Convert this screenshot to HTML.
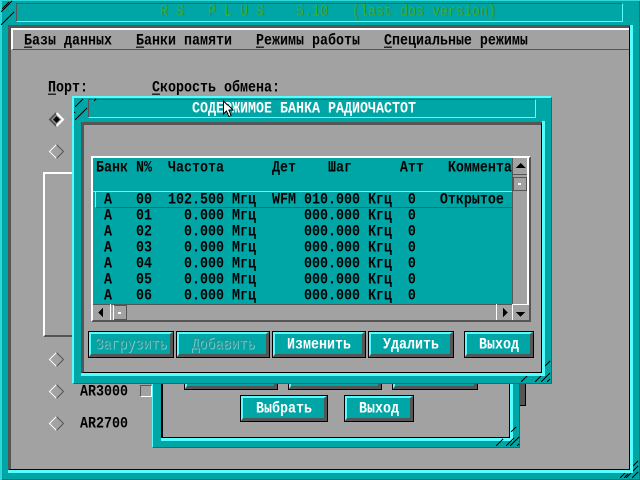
<!DOCTYPE html>
<html><head><meta charset="utf-8"><style>
html,body{margin:0;padding:0;background:#a2a2a2;}
#r{position:relative;width:640px;height:480px;overflow:hidden;background:#a2a2a2;font:bold 13.33px/16px "Liberation Mono","DejaVu Sans Mono",monospace;color:#000;}
#r div,#r pre,#r svg{position:absolute;margin:0;box-sizing:border-box;}
.t{white-space:pre;transform:scaleY(1.15);transform-origin:0 50%;font:inherit;}
.w{color:#fff;}
.u{text-decoration:underline;text-underline-offset:2px;}
.btn{background:#00a5a5;border:1px solid #000;}
.btn:before{content:"";position:absolute;left:0;top:0;right:0;bottom:0;border-top:2px solid #55ffff;border-left:2px solid #55ffff;border-right:3px solid #555;border-bottom:3px solid #555;}
.btn span{position:absolute;left:0;right:0;top:4px;text-align:center;color:#fff;transform:scaleY(1.15);font:inherit;}
.btn.d span{color:#2e8f8f;text-shadow:1px 1px 0 #6cd0d0;font-weight:normal;}
</style></head><body><div id="r">

<!-- outer window -->
<div style="left:0;top:0;width:640px;height:480px;background:#00a5a5;border-right:1px solid #555;border-bottom:1px solid #555;"></div>
<div style="left:0;top:0;width:2px;height:480px;background:#2fd8d8;"></div>
<div style="left:0;top:0;width:640px;height:1px;background:#2fd8d8;"></div>
<div style="left:16px;top:3px;width:607px;height:19px;border:1px solid;border-color:#555 #55ffff #55ffff #555;"></div>
<div class="t" style="left:160px;top:5px;color:#35b535;text-shadow:1px 0 0 #1f7f6f;font-weight:normal;">R S   P L U S    5.10   (last dos version)</div>
<svg style="left:0;top:0" width="640" height="480" stroke="#000" stroke-width="1" fill="none" shape-rendering="crispEdges">
<path d="M1 12L12 1M1 25L14 12M9 2L2 9"/>
<path d="M620 478L632 466M626 478L638 466M632 478L638 472M629 470L638 461M624 478L628 474" stroke-width="1"/>
</svg>
<!-- client -->
<div style="left:8px;top:25px;width:622px;height:445px;background:#a2a2a2;border:3px solid;border-color:#555 #000 #000 #555;border-width:3px 1px 1px 3px;"></div>
<div style="left:11px;top:28px;width:618px;height:22px;border-top:2px solid #fff;border-left:2px solid #fff;border-bottom:1px solid #555;"></div>
<div style="left:630px;top:25px;width:3px;height:448px;background:#55ffff;"></div>
<div style="left:8px;top:470px;width:625px;height:3px;background:#55ffff;"></div>
<div class="t" style="left:24px;top:34px;"><span class="u">Б</span>азы данных   <span class="u">Б</span>анки памяти   <span class="u">Р</span>ежимы работы   <span class="u">С</span>пециальные режимы</div>
<div class="t" style="left:48px;top:81px;"><span class="u">П</span>орт:</div>
<div class="t" style="left:152px;top:81px;"><span class="u">С</span>корость обмена:</div>

<!-- diamonds -->
<svg style="left:48px;top:111px" width="18" height="320" fill="none">
<path d="M8.5 2L2 8.5L8.5 15" stroke="#555" stroke-width="2"/><path d="M8.5 2L15 8.5L8.5 15" stroke="#fff" stroke-width="2"/>
<path d="M8.5 5L5 8.5L8.5 12L12 8.5Z" fill="#000"/>
<g stroke-width="1">
<g transform="translate(0,32)"><path d="M8.5 1.5L1.5 8.5L8.5 15.5" stroke="#fff"/><path d="M8.5 1.5L15.5 8.5L8.5 15.5" stroke="#555"/></g>
<g transform="translate(0,240)"><path d="M8.5 1.5L1.5 8.5L8.5 15.5" stroke="#fff"/><path d="M8.5 1.5L15.5 8.5L8.5 15.5" stroke="#555"/></g>
<g transform="translate(0,272)"><path d="M8.5 1.5L1.5 8.5L8.5 15.5" stroke="#fff"/><path d="M8.5 1.5L15.5 8.5L8.5 15.5" stroke="#555"/></g>
<g transform="translate(0,304)"><path d="M8.5 1.5L1.5 8.5L8.5 15.5" stroke="#fff"/><path d="M8.5 1.5L15.5 8.5L8.5 15.5" stroke="#555"/></g>
</g></svg>

<!-- left box -->
<div style="left:43px;top:172px;width:40px;height:165px;border:1px solid;border-width:2px 0 2px 2px;border-color:#fff #555 #555 #fff;"></div>
<div class="t" style="left:80px;top:385px;">AR3000</div>
<div class="t" style="left:80px;top:417px;">AR2700</div>
<div style="left:140px;top:385px;width:12px;height:12px;border:1px solid;border-color:#555 #fff #fff #555;"></div>

<!-- buttons behind, right -->
<div style="left:500px;top:380px;width:26px;height:26px;background:#555;border-right:1px solid #000;border-bottom:1px solid #000;"></div>

<!-- second window -->
<div style="left:152px;top:340px;width:368px;height:108px;background:#00a5a5;border-left:1px solid #55ffff;border-right:1px solid #555;border-bottom:1px solid #555;"></div>
<div style="left:161px;top:340px;width:349px;height:98px;background:#a2a2a2;border-left:2px solid #000;border-bottom:1px solid #000;border-right:1px solid #000;"></div>
<div style="left:510px;top:340px;width:3px;height:101px;background:#55ffff;"></div>
<div style="left:161px;top:438px;width:352px;height:3px;background:#55ffff;"></div>
<svg style="left:490px;top:415px" width="30" height="33" stroke="#000" fill="none" shape-rendering="crispEdges"><path d="M16 31L24 23M27 31L29 29M6 31L13 24M20 31L29 22M26 12L21 17"/></svg>
<div class="btn" style="left:184px;top:370px;width:94px;height:20px;"></div>
<div class="btn" style="left:288px;top:370px;width:94px;height:20px;"></div>
<div class="btn" style="left:392px;top:370px;width:86px;height:20px;"></div>
<div class="btn" style="left:240px;top:395px;width:88px;height:27px;"><span style="top:6px">Выбрать</span></div>
<div class="btn" style="left:344px;top:395px;width:70px;height:27px;"><span style="top:6px">Выход</span></div>

<!-- front window -->
<div style="left:72px;top:96px;width:480px;height:288px;background:#00a5a5;border:1px solid;border-color:#55ffff #555 #555 #55ffff;border-width:2px 1px 1px 2px;"></div>
<div style="left:88px;top:99px;width:448px;height:19px;border:1px solid;border-color:#555 #55ffff #55ffff #555;"></div>
<div class="t w" style="left:192px;top:102px;">СОДЕРЖИМОЕ БАНКА РАДИОЧАСТОТ</div>
<svg style="left:72px;top:96px" width="480" height="288" stroke="#000" fill="none" shape-rendering="crispEdges">
<path d="M3 11L11 3M3 24L15 12M3 16L2 17M24 3L22 5"/>
<path d="M463 286L470 279M469 286L478 277M475 286L478 283M470 273L478 265M449 286L456 279"/>
</svg>
<!-- front content -->
<div style="left:81px;top:122px;width:461px;height:251px;background:#a2a2a2;border:3px solid;border-color:#555 #000 #000 #555;border-width:3px 1px 1px 3px;"></div>
<div style="left:542px;top:121px;width:3px;height:255px;background:#55ffff;"></div>
<div style="left:81px;top:373px;width:464px;height:3px;background:#55ffff;"></div>

<!-- list -->
<div style="left:91px;top:156px;width:440px;height:166px;background:#a2a2a2;border:2px solid;border-color:#fff #555 #555 #fff;"></div>
<div style="left:93px;top:158px;width:419px;height:146px;background:#00a5a5;"></div>
<div style="left:95px;top:191px;width:417px;height:17px;border:1px solid;border-color:#55ffff #00a5a5 #555 #55ffff;"></div>
<div style="left:93px;top:191px;width:419px;height:1px;background:#55ffff;"></div>
<pre class="t" style="left:96px;top:161px;">Банк N%  Частота      Дет    Шаг      Атт   Коммента</pre>
<pre class="t" style="left:96px;top:193px;"> A   00  102.500 Мгц  WFM 010.000 Кгц  0   Открытое</pre>
<pre class="t" style="left:96px;top:209px;"> A   01    0.000 Мгц      000.000 Кгц  0</pre>
<pre class="t" style="left:96px;top:225px;"> A   02    0.000 Мгц      000.000 Кгц  0</pre>
<pre class="t" style="left:96px;top:241px;"> A   03    0.000 Мгц      000.000 Кгц  0</pre>
<pre class="t" style="left:96px;top:257px;"> A   04    0.000 Мгц      000.000 Кгц  0</pre>
<pre class="t" style="left:96px;top:273px;"> A   05    0.000 Мгц      000.000 Кгц  0</pre>
<pre class="t" style="left:96px;top:289px;"> A   06    0.000 Мгц      000.000 Кгц  0</pre>

<!-- scrollbars -->
<div style="left:93px;top:304px;width:419px;height:1px;background:#555;"></div>
<div style="left:512px;top:158px;width:1px;height:147px;background:#555;"></div>
<svg style="left:93px;top:158px" width="437" height="164" shape-rendering="crispEdges">
<rect x="434" y="0" width="2" height="147" fill="#fff"/>
<rect x="420" y="16" width="14" height="1" fill="#555"/>
<rect x="420" y="146" width="16" height="1" fill="#fff"/>
<path d="M427.5 5L432.5 10H422.5Z" fill="#000"/>
<path d="M423 154H432L427.5 159Z" fill="#000"/>
<rect x="0" y="147" width="17" height="15" fill="#a2a2a2"/>
<rect x="17" y="146" width="1" height="16" fill="#fff"/>
<path d="M10 150V159L5 154.5Z" fill="#000"/>
<rect x="20.5" y="147.5" width="13" height="14" fill="#a2a2a2" stroke="#555"/>
<rect x="20" y="147" width="1" height="15" fill="#fff"/>
<rect x="25" y="154" width="3" height="2" fill="#fff"/>
<rect x="403" y="146" width="1" height="16" fill="#fff"/>
<path d="M410 150L415 154.5L410 159Z" fill="#000"/>
<rect x="419" y="146" width="1" height="16" fill="#fff"/>
<rect x="420.5" y="19.5" width="13" height="13" fill="#a2a2a2" stroke="#555"/>
<rect x="425" y="25" width="3" height="2" fill="#fff"/>
</svg>

<!-- bottom buttons -->
<div class="btn d" style="left:88px;top:331px;width:86px;height:27px;"><span style="top:6px">Загрузить</span></div>
<div class="btn d" style="left:176px;top:331px;width:94px;height:27px;"><span style="top:6px">Добавить</span></div>
<div class="btn" style="left:272px;top:331px;width:94px;height:27px;"><span style="top:6px">Изменить</span></div>
<div class="btn" style="left:368px;top:331px;width:86px;height:27px;"><span style="top:6px">Удалить</span></div>
<div class="btn" style="left:464px;top:331px;width:70px;height:27px;"><span style="top:6px">Выход</span></div>

<!-- cursor -->
<svg style="left:222px;top:100px" width="12" height="18" shape-rendering="crispEdges"><path d="M1.5 1V14L4.5 11L7 16.5L9 15.5L7 10H11Z" fill="#fff" stroke="#000" stroke-width="1"/></svg>
</div></body></html>
